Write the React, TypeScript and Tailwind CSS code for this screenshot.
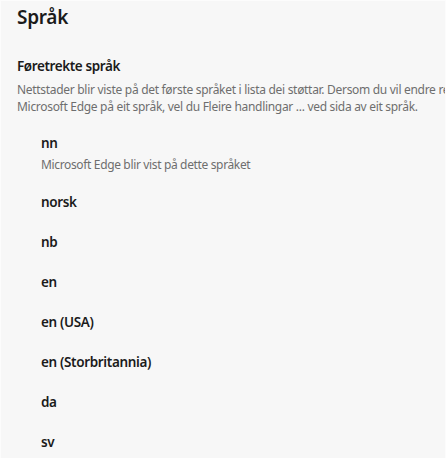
const languages: { code: string; note?: string }[] = [
  { code: "nn", note: "Microsoft Edge blir vist på dette språket" },
  { code: "norsk" },
  { code: "nb" },
  { code: "en" },
  { code: "en (USA)" },
  { code: "en (Storbritannia)" },
  { code: "da" },
  { code: "sv" },
];

export default function App() {
  return (
    <div
      className="h-[458px] w-[446px] overflow-hidden border-l border-t border-r border-[#fcfcfc] bg-[#f7f7f7] text-[#1b1b1b]"
      style={{ fontFamily: '"Noto Sans", "Open Sans", sans-serif' }}
    >
      <h1 className="pl-[16px] pt-[2px] text-[19px] leading-[28px] font-semibold tracking-[-0.3px]">Språk</h1>

      <section className="mt-[25px] pl-[16px]">
        <h2 className="text-[13.5px] leading-[20px] font-semibold tracking-[-0.4px]">Føretrekte språk</h2>
        <p className="mt-[5px] whitespace-nowrap text-[12px] leading-[17px] tracking-[-0.3px] text-[#6e6e6e]">
          Nettstader blir viste på det første språket i lista dei støttar. Dersom du vil endre rekkjefølgja, dra og slepp eit språk.
          <br />
          Microsoft Edge på eit språk, vel du Fleire handlingar ... ved sida av eit språk.
        </p>
      </section>

      <ul className="mt-[8px] pl-[40px]">
        {languages.map((lang) => (
          <li
            key={lang.code}
            className={lang.note ? "flex flex-col pt-[10px] pb-[7px]" : "flex h-[40px] flex-col justify-center"}
          >
            <span className="text-[13.5px] leading-[20px] font-semibold tracking-[-0.35px]">{lang.code}</span>
            {lang.note && (
              <span className="mt-[2px] text-[12px] leading-[20px] tracking-[-0.35px] text-[#6e6e6e]">{lang.note}</span>
            )}
          </li>
        ))}
      </ul>
    </div>
  );
}
